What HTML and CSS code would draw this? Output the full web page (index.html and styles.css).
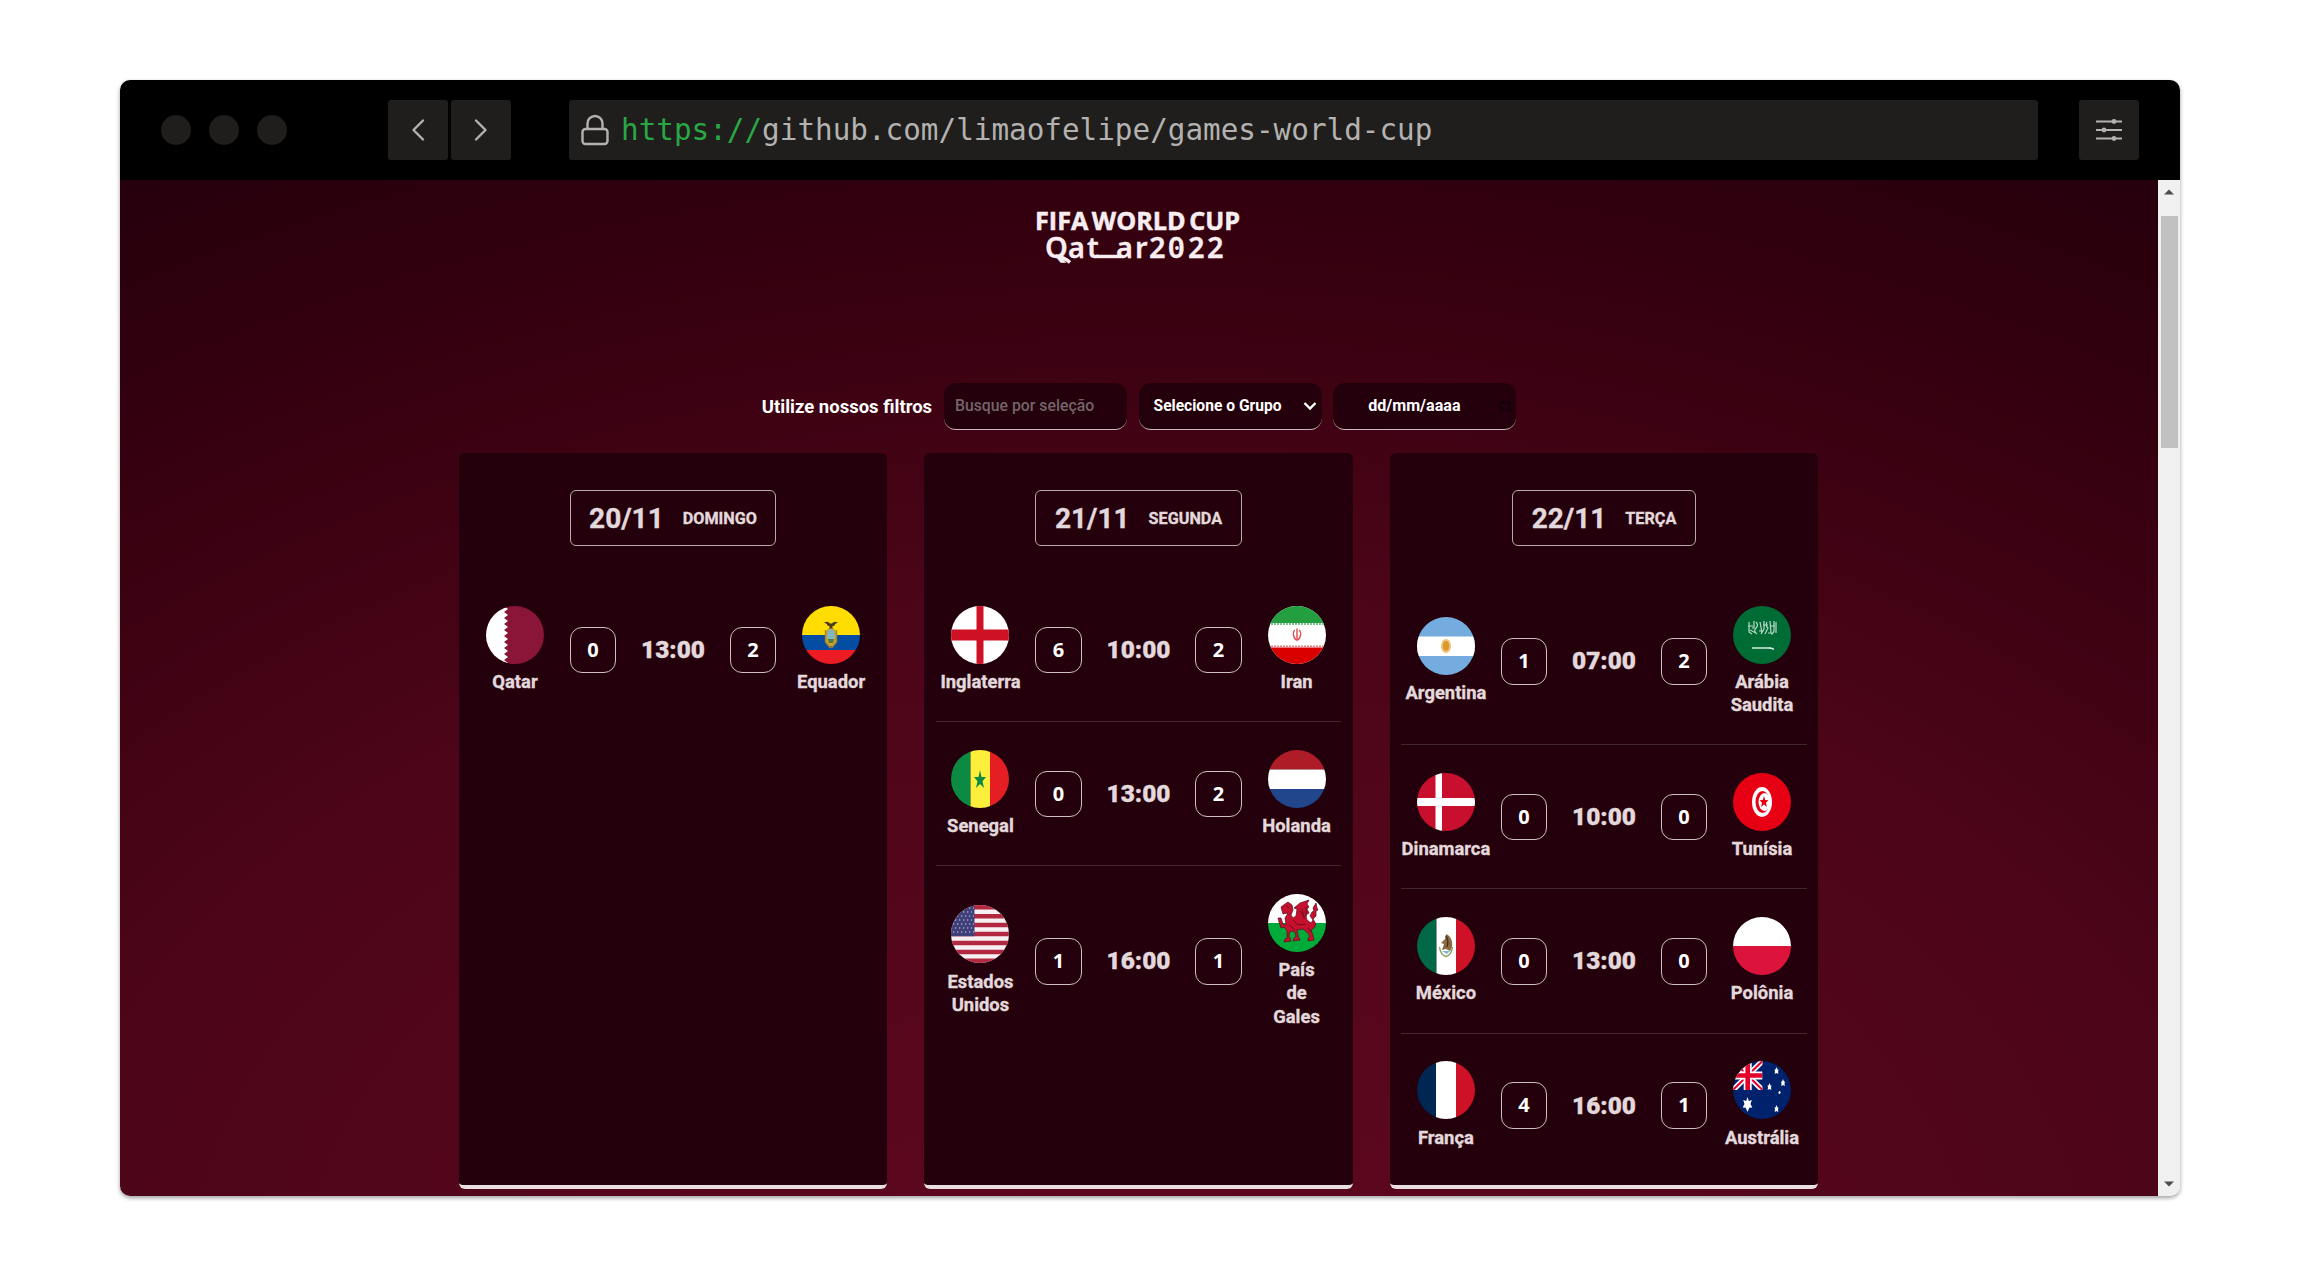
FILE: index.html
```html
<!DOCTYPE html>
<html lang="pt-BR">
<head>
<meta charset="utf-8">
<title>Games World Cup</title>
<link rel="stylesheet" href="styles.css">
</head>
<body>
<div class="window">
  <header class="toolbar">
    <div class="dots"><i></i><i></i><i></i></div>
    <div class="nav">
      <button class="tool" aria-label="Back"><svg width="60" height="60" viewBox="0 0 60 60"><path d="M35 20.500L25.500 30L35 39.500"/></svg></button>
      <button class="tool" aria-label="Forward"><svg width="60" height="60" viewBox="0 0 60 60"><path d="M25 20.500L34.500 30L25 39.500"/></svg></button>
    </div>
    <div class="address">
      <svg class="lock" width="28" height="32" viewBox="0 0 28 32"><rect x="1.500" y="15" width="25" height="15" rx="3"/><path d="M6.500 15V9.500a7.500 7.500 0 0 1 15 0V15"/></svg>
      <span class="url"><span class="scheme">https://</span>github.com/limaofelipe/games-world-cup</span>
    </div>
    <button class="tool settings" aria-label="Settings"><svg width="60" height="60" viewBox="0 0 60 60"><path d="M17 21.500H43M17 30H43M17 38.500H43"/><g class="knob"><circle cx="35" cy="21.500" r="2.400"/><circle cx="25" cy="30" r="2.400"/><circle cx="35" cy="38.500" r="2.400"/></g></svg></button>
  </header>
  <div class="viewport">
    <main class="page">
      <svg class="logo" width="210" height="76" viewBox="0 -8 210 76" role="img" aria-label="FIFA World Cup Qatar 2022">
        <text class="logo-top" x="1" y="22" textLength="205" lengthAdjust="spacingAndGlyphs">FIFA WORLD CUP</text>
        <text class="logo-bottom" y="50" x="11 34 53 82 101 115 134 154 173">Qatar2022</text>
        <path d="M22 48Q30 49 36 54.500" fill="none" stroke="#f8eef1" stroke-width="3.500"/>
        <path d="M62 48.500H87" stroke="#f8eef1" stroke-width="3.400"/>
        <circle cx="143" cy="40" r="1.900" fill="#f8eef1"/>
      </svg>

      <form class="filters">
        <span class="filters-label">Utilize nossos filtros</span>
        <div class="field search">Busque por seleção</div>
        <div class="field group">Selecione o Grupo<svg width="14" height="10" viewBox="0 0 14 10"><path d="M1.500 2L7 7.500L12.500 2"/></svg></div>
        <div class="field date">dd/mm/aaaa<svg width="12" height="12" viewBox="0 0 12 12"><path d="M1.500 2h9v8.500h-9zM1.500 3h9"/></svg></div>
      </form>

      <div class="cards">
        <section class="card">
          <h2 class="day">20/11 <span>DOMINGO</span></h2>
          <ul>
            <li>
              <div class="team"><svg class="flag" viewBox="0 0 58 58"><path fill="#8a1538" d="M0 0h58v58H0z"/><path fill="#fff" d="M0 0H18L22 3L18 6L22 9L18 12L22 15L18 18L22 21L18 24L22 27L18 30L22 33L18 36L22 39L18 42L22 45L18 48L22 51L18 54L22 57V58H0z"/></svg>Qatar</div>
              <div class="result"><b>0</b><time>13:00</time><b>2</b></div>
              <div class="team"><svg class="flag" viewBox="0 0 58 58"><path fill="#ffdd00" d="M0 0h58v29H0z"/><path fill="#034ea2" d="M0 29h58v15H0z"/><path fill="#ed1c24" d="M0 44h58v14H0z"/><ellipse cx="29" cy="31" rx="6" ry="9.500" fill="#c9a22b"/><ellipse cx="29" cy="29.500" rx="4" ry="6.500" fill="#7fb7c4"/><path d="M26 33h6l-1 4h-4z" fill="#4f7d3b"/><path d="M22 16.500q4-2 6 1h2q2-3 6-1-3 .5-4 3.500h-1.500v2.500h-3V20H26q-1-3-4-3.500z" fill="#4b3b1b"/><path d="M23.500 24v12l5 6M34.500 24v12l-5 6" fill="none" stroke="#a8842a" stroke-width="1.400"/></svg>Equador</div>
            </li>
          </ul>
        </section>

        <section class="card">
          <h2 class="day">21/11 <span>SEGUNDA</span></h2>
          <ul>
            <li>
              <div class="team"><svg class="flag" viewBox="0 0 58 58"><path fill="#fff" d="M0 0h58v58H0z"/><path fill="#ce1124" d="M25.500 0h7v23.500H58v11H32.500V58h-7V34.500H0v-11h25.500z"/></svg>Inglaterra</div>
              <div class="result"><b>6</b><time>10:00</time><b>2</b></div>
              <div class="team"><svg class="flag" viewBox="0 0 58 58"><path fill="#fff" d="M0 0h58v58H0z"/><path fill="#239f40" d="M0 0h58v17H0z"/><path fill="#da0000" d="M0 41.500h58V58H0z"/><path d="M0 18h58" stroke="#7cc48d" stroke-width="2" stroke-dasharray="2 1"/><path d="M0 40.500h58" stroke="#eb8080" stroke-width="2" stroke-dasharray="2 1"/><path d="M29 22.500V35M26.500 24q-3 5 1.500 10M31.500 24q3 5-1.500 10" fill="none" stroke="#e04a4a" stroke-width="1.400"/></svg>Iran</div>
            </li>
            <li>
              <div class="team"><svg class="flag" viewBox="0 0 58 58"><path fill="#0b8a43" d="M0 0h19.500v58H0z"/><path fill="#fdee3c" d="M19.500 0h19.500v58H19.500z"/><path fill="#e41e22" d="M39 0h19v58H39z"/><path fill="#0b8a43" d="M29 20l1.500 7H35l-3.500 4.200L33 38l-4-4-4 4 1.500-6.800L23 27h4.500z"/></svg>Senegal</div>
              <div class="result"><b>0</b><time>13:00</time><b>2</b></div>
              <div class="team"><svg class="flag" viewBox="0 0 58 58"><path fill="#ae1c28" d="M0 0h58v19.500H0z"/><path fill="#fff" d="M0 19.500h58V39H0z"/><path fill="#21468b" d="M0 39h58v19H0z"/></svg>Holanda</div>
            </li>
            <li>
              <div class="team"><svg class="flag" viewBox="0 0 58 58"><path fill="#f7f0f2" d="M0 0h58v58H0z"/><path d="M0 2.200h58M0 11.200h58M0 20.100h58M0 29h58M0 37.900h58M0 46.900h58M0 55.800h58" stroke="#b22840" stroke-width="4.500"/><path fill="#3f407a" d="M0 0h23.500v31.200H0z"/><path d="M2 3h21M0 7h21M2 11h21M0 15h21M2 19h21M0 23h21M2 27h21" stroke="#a3a4c4" stroke-width="1.300" stroke-dasharray="1.300 2.700"/></svg>Estados Unidos</div>
              <div class="result"><b>1</b><time>16:00</time><b>1</b></div>
              <div class="team narrow"><svg class="flag" viewBox="0 0 58 58"><path fill="#fff" d="M0 0h58v29H0z"/><path fill="#00ab39" d="M0 29h58v29H0z"/><path d="M13 13l4-3 3-2 4 3 1 5-2 5 2 3 3-2 1-7-3-1 6-5 9-3-2 4 2 3-2 2 2 4-3 2 1 5 4 3 2-3-3-4 2-4 2-1-1-3 3-5 1 5 1 2-2 1 0 5-3 3 3 5-2 4-3 2 2 5 1 5-6 1 0-3 2-1-2-4-5-4-6 1 1 6 2 4-7 1 1-3 2-1-1-5-5-1-1 5 2 5-7 1 1-3 2-1 0-7-3-4-3 1-2-6-1-4 3 0 2 6 3 1-1-7 3-5-5 1z" fill="#c8102e" stroke="#50101e" stroke-width=".7" stroke-linejoin="round"/><path d="M18 12l3 2M25 26l5 5 8-1M32 17l5 6M38 13l0 9M21 31l6 5M40 34l3 4M34 15l2 10" fill="none" stroke="#50101e" stroke-width=".8"/></svg>País de Gales</div>
            </li>
          </ul>
        </section>

        <section class="card">
          <h2 class="day">22/11 <span>TERÇA</span></h2>
          <ul>
            <li>
              <div class="team"><svg class="flag" viewBox="0 0 58 58"><path fill="#74acdf" d="M0 0h58v58H0z"/><path fill="#fff" d="M0 19.500h58V39H0z"/><ellipse cx="29" cy="29" rx="5" ry="7" fill="#f0c27a"/><ellipse cx="29" cy="29" rx="3.200" ry="5" fill="#d99a2b"/></svg>Argentina</div>
              <div class="result"><b>1</b><time>07:00</time><b>2</b></div>
              <div class="team"><svg class="flag" viewBox="0 0 58 58"><path fill="#006c35" d="M0 0h58v58H0z"/><path d="M16 16v10l3 2M15 20h5M21 15v7h-2M23 16q3 3 0 6t1 6M27 16l2 11M26 25h4M31 15v8l-3 5M34 16q-2 4 1 6l-3 6M37 15l1 12h-3M41 15v10q-1 3-3 3M43 16v11M17 24l6 3M30 19h5M38 20h4" fill="none" stroke="#b9d9c6" stroke-width="1.200"/><path d="M19 42h19" stroke="#d9eadf" stroke-width="1.600"/><path d="M36 42l4 .5v1.500" fill="none" stroke="#d9eadf" stroke-width="1.400"/></svg>Arábia Saudita</div>
            </li>
            <li>
              <div class="team"><svg class="flag" viewBox="0 0 58 58"><path fill="#c8102e" d="M0 0h58v58H0z"/><path fill="#fff" d="M18.500 0h6.500v25h33v8H25v25h-6.500V33H0v-8h18.500z"/></svg>Dinamarca</div>
              <div class="result"><b>0</b><time>10:00</time><b>0</b></div>
              <div class="team"><svg class="flag" viewBox="0 0 58 58"><path fill="#e70013" d="M0 0h58v58H0z"/><ellipse cx="29" cy="29" rx="10" ry="15" fill="#fff"/><ellipse cx="29.500" cy="29" rx="7" ry="11" fill="#e70013"/><ellipse cx="31.500" cy="29" rx="6" ry="9" fill="#fff"/><path d="M31 23l1.200 4 3.300.2-2.500 2.500.9 4.300-2.900-2.500-2.900 2.500.9-4.300-2.500-2.500 3.300-.2z" fill="#e70013"/></svg>Tunísia</div>
            </li>
            <li>
              <div class="team"><svg class="flag" viewBox="0 0 58 58"><path fill="#006847" d="M0 0h19.500v58H0z"/><path fill="#fff" d="M19.500 0h19.500v58H19.500z"/><path fill="#ce1126" d="M39 0h19v58H39z"/><path d="M29 17q5 2 6 8t-2 9l-4-2-4 1 2-6-3-1 4-4z" fill="#8a6a45"/><path d="M29 19q3 5 1 11" fill="none" stroke="#4a3420" stroke-width="1.500"/><path d="M22.500 30q1 8 6.500 9.500 5.500-1.500 6.500-9.500" fill="none" stroke="#8fa66b" stroke-width="1.500"/><path d="M25 34h8l-3 3z" fill="#6fbfc4"/></svg>México</div>
              <div class="result"><b>0</b><time>13:00</time><b>0</b></div>
              <div class="team"><svg class="flag" viewBox="0 0 58 58"><path fill="#fff" d="M0 0h58v29H0z"/><path fill="#dc143c" d="M0 29h58v29H0z"/></svg>Polônia</div>
            </li>
            <li>
              <div class="team"><svg class="flag" viewBox="0 0 58 58"><path fill="#002654" d="M0 0h19v58H0z"/><path fill="#fff" d="M19 0h20v58H19z"/><path fill="#ce1126" d="M39 0h19v58H39z"/></svg>França</div>
              <div class="result"><b>4</b><time>16:00</time><b>1</b></div>
              <div class="team"><svg class="flag" viewBox="0 0 58 58"><path fill="#00216b" d="M0 0h58v58H0z"/><svg width="29.500" height="29" viewBox="0 0 29.500 29"><path d="M0 0L29.500 29M29.500 0L0 29" stroke="#fff" stroke-width="5.500"/><path d="M0 0L29.500 29M29.500 0L0 29" stroke="#e4002b" stroke-width="2"/><path d="M14.700 0V29M0 14.500H29.500" stroke="#fff" stroke-width="8"/><path d="M14.700 0V29M0 14.500H29.500" stroke="#e4002b" stroke-width="4.600"/></svg><g fill="#fff"><path d="M14.500 36l1.300 4 3-1-1.300 4 1.800 3.500-3 .3-1.800 4.200-1.800-4.200-3-.3 1.800-3.500-1.300-4 3 1z"/><path d="M43.500 6l1 2.500 1 0-.5 2 .3 2.500-1.800-1-1.800 1 .3-2.500-.5-2 1 0z"/><path d="M36.500 22l1 2.500 1 0-.5 2 .3 2.500-1.800-1-1.800 1 .3-2.500-.5-2 1 0z"/><path d="M50 18l1 2.500 1 0-.5 2 .3 2.500-1.800-1-1.800 1 .3-2.500-.5-2 1 0z"/><path d="M43.500 44l1 2.500 1 0-.5 2 .3 2.500-1.800-1-1.800 1 .3-2.500-.5-2 1 0z"/><ellipse cx="46.500" cy="31.500" rx="1" ry="1.600"/></g></svg>Austrália</div>
            </li>
          </ul>
        </section>
      </div>
    </main>
    <div class="scrollbar">
      <svg width="10" height="6" viewBox="0 0 10 6"><path d="M0 5.500L5 .5L10 5.500z"/></svg>
      <div class="thumb"></div>
      <svg class="down" width="10" height="6" viewBox="0 0 10 6"><path d="M0 .5L5 5.500L10 .5z"/></svg>
    </div>
  </div>
</div>
</body>
</html>
```
FILE: styles.css
```css
* { box-sizing: border-box; }
body {
  margin: 0;
  height: 1276px;
  padding: 80px 120px;
  background: #fff;
  font-family: Roboto, sans-serif;
  overflow: hidden;
}
.window {
  height: 1116px;
  border-radius: 10px;
  overflow: hidden;
  box-shadow: 0 2px 4px rgba(0, 0, 0, .38);
}

/* Browser toolbar */
.toolbar {
  height: 100px;
  background: #000;
  display: flex;
  align-items: center;
  padding: 0 41px;
}
.dots { display: flex; gap: 18px; width: 227px; }
.dots i { width: 30px; height: 30px; border-radius: 50%; background: #1f1e1c; }
.nav { display: flex; gap: 3px; width: 181px; }
.tool {
  width: 60px;
  height: 60px;
  padding: 0;
  border: 0;
  border-radius: 3px;
  background: #1f1e1c;
}
.tool svg { display: block; fill: none; stroke: #b3b2b0; stroke-width: 2.4; stroke-linecap: round; stroke-linejoin: round; }
.settings svg { stroke-width: 2; stroke-linecap: butt; }
.knob { fill: #b3b2b0; stroke: none; }
.address {
  flex: 1;
  height: 60px;
  margin-right: 41px;
  padding-left: 12px;
  border-radius: 3px;
  background: #1f1e1c;
  display: flex;
  align-items: center;
  gap: 12px;
}
.lock { fill: none; stroke: #b3b2b0; stroke-width: 2.4; }
.url { font: 29.3px/60px "DejaVu Sans Mono", monospace; color: #b3b2b0; white-space: pre; }
.scheme { color: #2aa745; }

/* Page */
.viewport { display: flex; height: 1016px; }
.page {
  flex: 1;
  display: flex;
  flex-direction: column;
  align-items: center;
  padding-top: 20px;
  background: radial-gradient(1950px 1250px at 50% 110%, #60081f 0%, #4c0519 56%, #35000f 85%, #24000c 106%);
}
.logo { flex: none; }
.logo-top { font: 700 25px "Open Sans", sans-serif; fill: #f8eef1; stroke: #f8eef1; stroke-width: .5; word-spacing: -3px; }
.logo-bottom { font: 600 29px "Noto Sans", sans-serif; fill: #f8eef1; stroke: #f8eef1; stroke-width: .3; }

.filters {
  display: flex;
  align-items: center;
  gap: 11.6px;
  height: 47px;
  margin-top: 107px;
  color: #fff;
}
.filters-label { font-size: 18.5px; font-weight: 700; width: 170.500px; white-space: nowrap; }
.field {
  width: 183px;
  height: 47px;
  border-radius: 12px;
  border-bottom: 1.500px solid #c9b9be;
  background: #23000b;
  font-size: 15.6px;
  font-weight: 700;
  line-height: 46px;
}
.search { padding-left: 11px; color: #75646a; font-weight: 500; font-size: 15.8px; }
.group, .date { display: flex; align-items: center; justify-content: space-between; }
.group { padding: 0 5px 0 15px; }
.group svg { fill: none; stroke: #fff; stroke-width: 2.4; }
.date { padding: 0 5px 0 35px; font-size: 16.1px; }
.date svg { fill: none; stroke: #12000a; stroke-width: 1.500; }

.cards { display: flex; gap: 36.9px; margin-top: 23px; margin-right: 1px; }
.card {
  width: 428.600px;
  height: 736px;
  padding: 37px 11.600px 0;
  border-radius: 6px;
  border-bottom: 4px solid #e9dfe2;
  background: #23000b;
  color: #e3d9dc;
  -webkit-text-stroke: .35px;
  display: flex;
  flex-direction: column;
  align-items: center;
}
.day {
  display: flex;
  align-items: center;
  gap: 19px;
  height: 56px;
  margin: 0;
  padding: 0 18.500px;
  border: 1.500px solid #b8a9ae;
  border-radius: 6px;
  font-size: 28px;
  font-weight: 700;
}
.day span { font-size: 16.2px; }
.card ul { width: 100%; margin: 31px 0 0; padding: 0; list-style: none; }
.card li {
  display: flex;
  align-items: center;
  justify-content: space-between;
  padding: 28.500px 0 28px;
}
.card li + li { border-top: 1px solid #43282f; padding-top: 27.700px; }
.team {
  width: 89.300px;
  display: flex;
  flex-direction: column;
  align-items: center;
  text-align: center;
  gap: 6.300px;
  font-size: 18.4px;
  line-height: 23.2px;
  font-weight: 700;
}
.narrow { padding: 0 20px; }
.flag { width: 58px; height: 58px; border-radius: 50%; flex: none; }
.result { width: 206.500px; display: flex; align-items: center; justify-content: space-between; }
.result b {
  width: 46.500px;
  height: 46.500px;
  margin-top: 1px;
  border: 1.200px solid #cdc1c5;
  border-radius: 12px;
  font: 700 20px/44px "Noto Sans", sans-serif;
  text-align: center;
  color: #fff;
  -webkit-text-stroke: 0;
}
.result time { font-size: 24.4px; font-weight: 900; }

.scrollbar {
  width: 22px;
  background: #f1f0f0;
  display: flex;
  flex-direction: column;
  align-items: center;
  padding: 9px 0;
}
.scrollbar svg { display: block; fill: #4d4d4d; }
.thumb { width: 17px; height: 232px; margin-top: 21px; background: #c1c1c1; }
.down { margin-top: auto; }
```
